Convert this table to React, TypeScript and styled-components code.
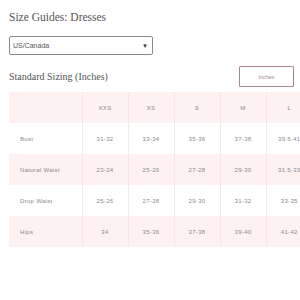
import React from 'react';
import styled, { createGlobalStyle } from 'styled-components'

const GlobalStyle = createGlobalStyle`
  html, body {
    margin: 0;
    padding: 0;
    background: #ffffff;
  }
`

const Page = styled.div`
  width: 300px;
  height: 300px;
  overflow: hidden;
  padding: 10px 0 0 9px;
  box-sizing: border-box;
  background: #ffffff;
`

const Title = styled.h1`
  margin: 0;
  font-family: "Liberation Serif", serif;
  font-weight: normal;
  font-size: 11.5px;
  line-height: 14px;
  color: #555555;
`

const SelectBox = styled.div`
  margin-top: 12px;
  width: 144px;
  height: 19px;
  box-sizing: border-box;
  border: 1px solid #8a8a8a;
  border-radius: 2px;
  display: flex;
  align-items: center;
  justify-content: space-between;
  padding: 0 4px 0 3px;
  font-family: "Liberation Sans", sans-serif;
  font-size: 7px;
  color: #555555;
`

const Arrow = styled.span`
  font-size: 6px;
  color: #333333;
`

const SubHeader = styled.div`
  margin-top: 11px;
  width: 285px;
  display: flex;
  align-items: center;
  justify-content: space-between;
`

const SubTitle = styled.h2`
  margin: 0;
  font-family: "Liberation Serif", serif;
  font-weight: normal;
  font-size: 10px;
  color: #555555;
`

const UnitButton = styled.button`
  width: 55px;
  height: 21px;
  box-sizing: border-box;
  border: 1.5px solid #a88596;
  border-radius: 1px;
  background: #ffffff;
  font-family: "Liberation Sans", sans-serif;
  font-size: 5.5px;
  color: #a88596;
  padding: 0;
`

const TableWrap = styled.div`
  margin-top: 5px;
  overflow: hidden;
`

const Table = styled.table`
  border-collapse: collapse;
  table-layout: fixed;
  width: 303px;
  font-family: "Liberation Sans", sans-serif;
  font-size: 6px;
  letter-spacing: 0.3px;
  color: #8a8a8a;
`

const Row = styled.tr<{ $tinted: boolean }>`
  height: 31px;
  background: ${p => p.$tinted ? '#fdf1f1' : '#ffffff'};
`

const Cell = styled.td<{ $label?: boolean }>`
  padding: 0;
  text-align: ${p => p.$label ? 'left' : 'center'};
  padding-left: ${p => p.$label ? '11px' : '0'};
  border-left: 1px solid #f7e6e6;
  white-space: nowrap;
  overflow: hidden;
  &:first-child {
    border-left: none;
  }
`

const sizes = ['XXS', 'XS', 'S', 'M', 'L']

const rows: { label: string, values: string[] }[] = [
  { label: 'Bust', values: ['31-32', '33-34', '35-36', '37-38', '39.5-41'] },
  { label: 'Natural Waist', values: ['23-24', '25-26', '27-28', '29-30', '31.5-33'] },
  { label: 'Drop Waist', values: ['25-26', '27-28', '29-30', '31-32', '33-35'] },
  { label: 'Hips', values: ['34', '35-36', '37-38', '39-40', '41-42'] },
]

function App() {
  return (
    <Page>
      <GlobalStyle />
      <Title>Size Guides: Dresses</Title>
      <SelectBox>
        <span>US/Canada</span>
        <Arrow>▼</Arrow>
      </SelectBox>
      <SubHeader>
        <SubTitle>Standard Sizing (Inches)</SubTitle>
        <UnitButton>Inches</UnitButton>
      </SubHeader>
      <TableWrap>
        <Table>
          <colgroup>
            <col style={{ width: 73 }} />
            {sizes.map(s => <col key={s} style={{ width: 46 }} />)}
          </colgroup>
          <tbody>
            <Row $tinted={true}>
              <Cell $label />
              {sizes.map(s => <Cell key={s}>{s}</Cell>)}
            </Row>
            {rows.map((r, i) => (
              <Row key={r.label} $tinted={i % 2 === 1}>
                <Cell $label>{r.label}</Cell>
                {r.values.map((v, j) => <Cell key={j}>{v}</Cell>)}
              </Row>
            ))}
          </tbody>
        </Table>
      </TableWrap>
    </Page>
  );
}

export default App;
